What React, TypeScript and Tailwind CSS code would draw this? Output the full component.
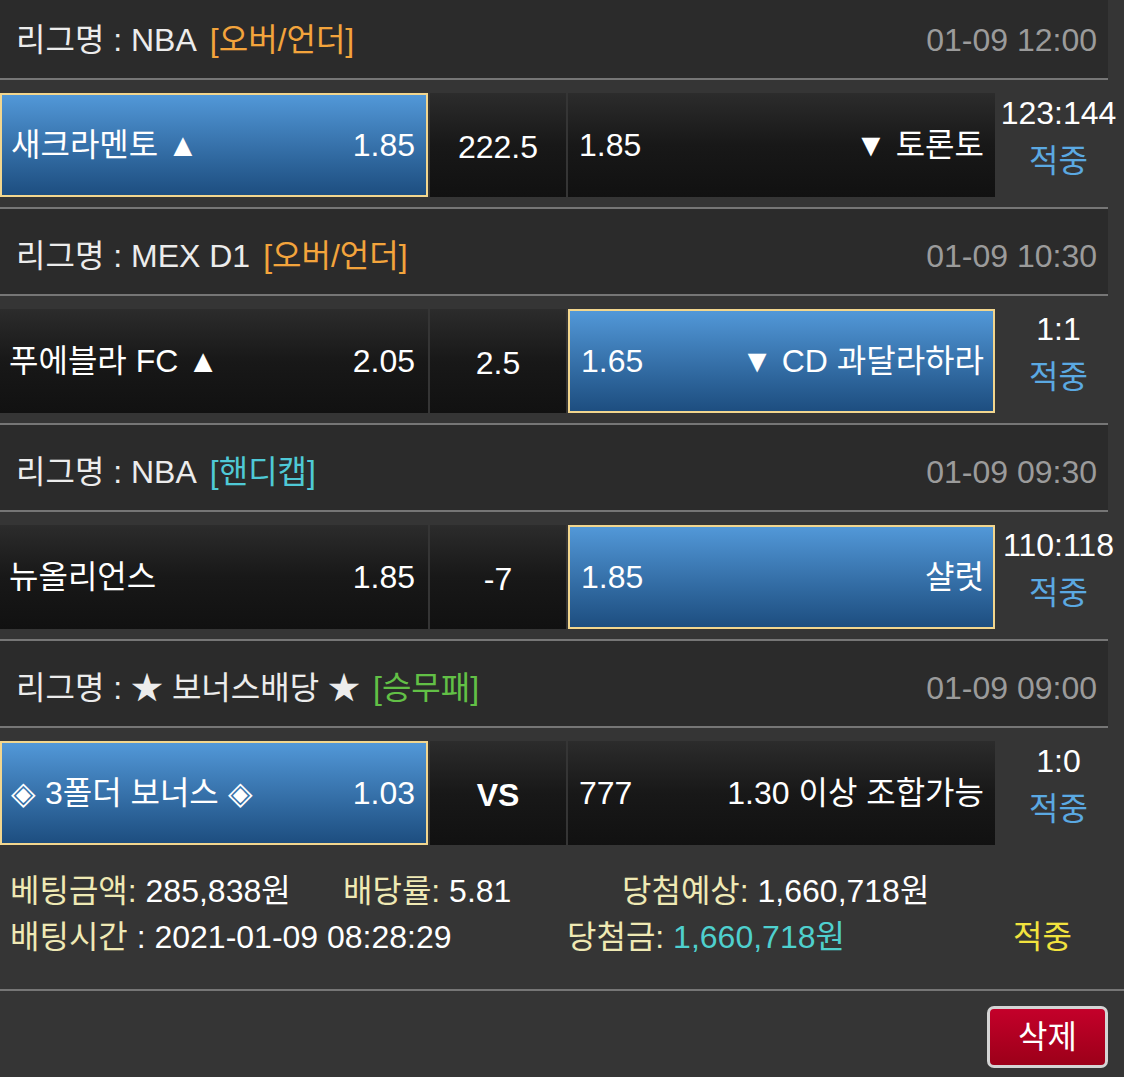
import React from "react";

type Game = {
  league: string;
  tag: string;
  tagClass: string;
  time: string;
  home: string;
  homeOdd: string;
  mid: string;
  midBold?: boolean;
  awayOdd: string;
  away: string;
  sel: "home" | "away";
  score: string;
};

const games: Game[] = [
  { league: "NBA", tag: "[오버/언더]", tagClass: "text-[#f3a43c]", time: "01-09 12:00", home: "새크라멘토 ▲", homeOdd: "1.85", mid: "222.5", awayOdd: "1.85", away: "▼ 토론토", sel: "home", score: "123:144" },
  { league: "MEX D1", tag: "[오버/언더]", tagClass: "text-[#f3a43c]", time: "01-09 10:30", home: "푸에블라 FC ▲", homeOdd: "2.05", mid: "2.5", awayOdd: "1.65", away: "▼ CD 과달라하라", sel: "away", score: "1:1" },
  { league: "NBA", tag: "[핸디캡]", tagClass: "text-[#4fc9d6]", time: "01-09 09:30", home: "뉴올리언스", homeOdd: "1.85", mid: "-7", awayOdd: "1.85", away: "샬럿", sel: "away", score: "110:118" },
  { league: "★ 보너스배당 ★", tag: "[승무패]", tagClass: "text-[#62c046]", time: "01-09 09:00", home: "◈ 3폴더 보너스 ◈", homeOdd: "1.03", mid: "VS", midBold: true, awayOdd: "777", away: "1.30 이상 조합가능", sel: "home", score: "1:0" },
];

const selCls =
  "border-2 border-[#f2d68e] bg-gradient-to-b from-[#5298d8] to-[#1d4e80]";
const plainCls = "bg-gradient-to-b from-[#2c2c2c] via-[#181818] to-[#111111]";

function Block({ g, last }: { g: Game; last: boolean }) {
  return (
    <div>
      <div className="w-[1108px] h-[87px] bg-[#2b2b2b] border-b-2 border-[#767676] flex items-center justify-between pl-[16px] pr-[11px] pt-[9px]">
        <div className="flex items-center text-[#ececec]">
          <span>리그명 : {g.league}</span>
          <span className={`ml-[13px] ${g.tagClass}`}>{g.tag}</span>
        </div>
        <span className="text-[#9b9b9b]">{g.time}</span>
      </div>
      <div className={`h-[129px] ${last ? "w-[1124px]" : "border-b-2 border-[#767676] w-[1108px]"}`}>
        <div className="w-[1124px] flex gap-[2px] pt-[13px]">
          <div
            className={`w-[428px] h-[104px] flex items-center justify-between text-white ${
              g.sel === "home" ? `${selCls} pl-[9px] pr-[11px]` : `${plainCls} pl-[9px] pr-[13px]`
            }`}
          >
            <span>{g.home}</span>
            <span>{g.homeOdd}</span>
          </div>
          <div className={`w-[136px] h-[104px] flex items-center justify-center pt-[4px] text-white ${plainCls} ${g.midBold ? "font-bold" : ""}`}>
            {g.mid}
          </div>
          <div
            className={`w-[427px] h-[104px] flex items-center justify-between text-white ${
              g.sel === "away" ? `${selCls} pl-[11px] pr-[9px]` : `${plainCls} pl-[11px] pr-[11px]`
            }`}
          >
            <span>{g.awayOdd}</span>
            <span>{g.away}</span>
          </div>
          <div className="flex-1 flex flex-col items-center pr-[4px] leading-[48px] -mt-[4px]">
            <span className="text-white">{g.score}</span>
            <span className="text-[#5ba9e2]">적중</span>
          </div>
        </div>
      </div>
    </div>
  );
}

export default function App() {
  return (
    <div className="w-[1124px] h-[1077px] overflow-hidden bg-[#353535] text-[32px] leading-[40px] font-[family-name:'Liberation_Sans','Noto_Sans_CJK_KR',sans-serif]">
      <div className="-mt-[7px]">
        {games.map((g, i) => (
          <Block key={i} g={g} last={i === games.length - 1} />
        ))}
        <div className="h-[134px] border-b-2 border-[#767676] pt-[14px] pl-[10px] flex flex-col gap-[6px]">
          <div className="flex">
            <span className="w-[333px]">
              <span className="text-[#efe9b4]">베팅금액:</span>
              <span className="text-white"> 285,838원</span>
            </span>
            <span className="w-[279px]">
              <span className="text-[#efe9b4]">배당률:</span>
              <span className="text-white"> 5.81</span>
            </span>
            <span>
              <span className="text-[#efe9b4]">당첨예상:</span>
              <span className="text-white"> 1,660,718원</span>
            </span>
          </div>
          <div className="flex">
            <span className="w-[557px]">
              <span className="text-[#efe9b4]">배팅시간</span>
              <span className="text-white"> : 2021-01-09 08:28:29</span>
            </span>
            <span className="w-[446px]">
              <span className="text-[#efe9b4]">당첨금:</span>
              <span className="text-[#4fd0ce]"> 1,660,718원</span>
            </span>
            <span className="text-[#f2e33e]">적중</span>
          </div>
        </div>
        <div className="flex justify-end pr-[16px] pt-[15px]">
          <button className="w-[121px] h-[62px] rounded-[7px] border-[3px] border-[#d4d4d4] bg-gradient-to-b from-[#c4002a] to-[#9c0019] text-white flex items-center justify-center">
            삭제
          </button>
        </div>
      </div>
    </div>
  );
}
